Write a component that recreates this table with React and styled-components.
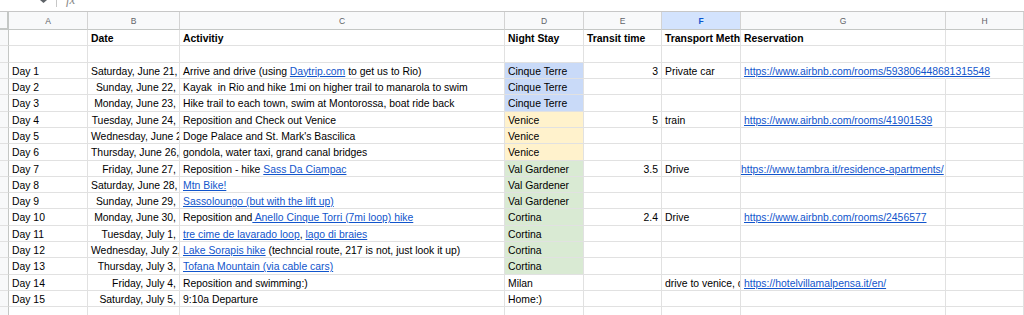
import React from 'react';
import styled, { createGlobalStyle } from 'styled-components';

const GlobalStyle = createGlobalStyle`
  body {
    margin: 0;
    background: #fff;
    font-family: "Liberation Sans", Arial, sans-serif;
  }
`;

const columns = ['A', 'B', 'C', 'D', 'E', 'F', 'G', 'H'];

const stayColors = {
  'Cinque Terre': '#c9daf8',
  Venice: '#fff2cc',
  'Val Gardener': '#d9ead3',
  Cortina: '#d9ead3',
};

const days = [
  {
    date: 'Saturday, June 21,',
    act: ['Arrive and drive (using ', { l: 'Daytrip.com' }, ' to get us to Rio)'],
    stay: 'Cinque Terre',
    time: '3',
    method: 'Private car',
    res: 'https://www.airbnb.com/rooms/593806448681315548',
    spill: true,
  },
  { date: 'Sunday, June 22,', act: ['Kayak  in Rio and hike 1mi on higher trail to manarola to swim'], stay: 'Cinque Terre' },
  { date: 'Monday, June 23,', act: ['Hike trail to each town, swim at Montorossa, boat ride back'], stay: 'Cinque Terre' },
  {
    date: 'Tuesday, June 24,',
    act: ['Reposition and Check out Venice'],
    stay: 'Venice',
    time: '5',
    method: 'train',
    res: 'https://www.airbnb.com/rooms/41901539',
  },
  { date: 'Wednesday, June 25,', act: ["Doge Palace and St. Mark's Bascilica"], stay: 'Venice' },
  { date: 'Thursday, June 26,', act: ['gondola, water taxi, grand canal bridges'], stay: 'Venice' },
  {
    date: 'Friday, June 27,',
    act: ['Reposition - hike ', { l: 'Sass Da Ciampac' }],
    stay: 'Val Gardener',
    time: '3.5',
    method: 'Drive',
    res: 'https://www.tambra.it/residence-apartments/',
    tight: true,
  },
  { date: 'Saturday, June 28,', act: [{ l: 'Mtn Bike!' }], stay: 'Val Gardener' },
  { date: 'Sunday, June 29,', act: [{ l: 'Sassoloungo (but with the lift up)' }], stay: 'Val Gardener' },
  {
    date: 'Monday, June 30,',
    act: ['Reposition and', { l: ' Anello Cinque Torri (7mi loop) hike' }],
    stay: 'Cortina',
    time: '2.4',
    method: 'Drive',
    res: 'https://www.airbnb.com/rooms/2456577',
  },
  { date: 'Tuesday, July 1,', act: [{ l: 'tre cime de lavarado loop' }, ', ', { l: 'lago di braies' }], stay: 'Cortina' },
  {
    date: 'Wednesday, July 2,',
    act: [{ l: 'Lake Sorapis hike' }, ' (techncial route, 217 is not, just look it up)'],
    stay: 'Cortina',
  },
  { date: 'Thursday, July 3,', act: [{ l: 'Tofana Mountain (via cable cars)' }], stay: 'Cortina' },
  {
    date: 'Friday, July 4,',
    act: ['Reposition and swimming:)'],
    stay: 'Milan',
    method: 'drive to venice, check out',
    res: 'https://hotelvillamalpensa.it/en/',
  },
  { date: 'Saturday, July 5,', act: ['9:10a Departure'], stay: 'Home:)' },
];

const Sheet = styled.div`
  width: 1024px;
  height: 315px;
  overflow: hidden;
  background: #fff;
`;

const FormulaStrip = styled.div`
  height: 11px;
  display: flex;
  align-items: flex-start;
  padding-left: 40px;
  border-bottom: 1px solid #c7c7c7;
  overflow: hidden;
`;

const Caret = styled.svg`
  width: 7px;
  height: 3px;
  display: block;
`;

const Divider = styled.div`
  width: 1px;
  height: 7px;
  margin-left: 9px;
  background: #c7c7c7;
`;

const Fx = styled.span`
  margin-left: 9px;
  margin-top: -7px;
  font-family: "Liberation Serif", serif;
  font-style: italic;
  font-size: 13px;
  line-height: 13px;
  color: #8a8a8a;
`;

const Grid = styled.div`
  display: grid;
  grid-template-columns: 9px 79px 92px 325px 79px 78px 79px 205px 1fr;
  grid-template-rows: 18px;
  grid-auto-rows: 16.32px;
`;

const Corner = styled.div`
  background: #f8f9fa;
  border-right: 2px solid #c4c7c5;
  border-bottom: 2px solid #c4c7c5;
`;

const ColHead = styled.div`
  box-sizing: border-box;
  background: ${(p) => (p.$active ? '#d3e3fd' : '#f8f9fa')};
  border-right: 1px solid #d3d3d3;
  border-bottom: 1px solid #c4c7c5;
  display: flex;
  align-items: center;
  justify-content: center;
  font-size: 8.5px;
  font-weight: ${(p) => (p.$active ? 700 : 400)};
  color: ${(p) => (p.$active ? '#0b57d0' : '#5f6368')};
`;

const RowHead = styled.div`
  background: #f8f9fa;
  border-right: 1px solid #c4c7c5;
  border-bottom: 1px solid #e1e1e1;
`;

const Cell = styled.div`
  box-sizing: border-box;
  background: ${(p) => p.$bg || 'transparent'};
  border-right: 1px solid ${(p) => (p.$spill ? 'transparent' : '#e1e1e1')};
  border-bottom: 1px solid #e1e1e1;
  padding: 1px ${(p) => (p.$tight ? '0' : '3px')} 0;
  font-size: 10.4px;
  line-height: 15.3px;
  font-weight: ${(p) => (p.$bold ? 700 : 400)};
  color: #000;
  text-align: ${(p) => p.$align || 'left'};
  white-space: pre;
  overflow: ${(p) => (p.$spill ? 'visible' : 'hidden')};
  position: ${(p) => (p.$spill ? 'relative' : 'static')};
  z-index: ${(p) => (p.$spill ? 1 : 'auto')};
`;

const Link = styled.span`
  color: #1155cc;
  text-decoration: underline;
`;

const Text = ({ parts }) =>
  parts.map((part, i) =>
    typeof part === 'string' ? <span key={i}>{part}</span> : <Link key={i}>{part.l}</Link>
  );

const Row = ({ label, date, act, stay, time, method, res, bold, spill, tight, header }) => (
  <>
    <RowHead />
    <Cell $bold={bold}>{label}</Cell>
    <Cell $bold={bold} $align={header ? 'left' : 'right'}>{date}</Cell>
    <Cell $bold={bold}>{act ? <Text parts={act} /> : null}</Cell>
    <Cell $bold={bold} $bg={stayColors[stay]}>{stay}</Cell>
    <Cell $bold={bold} $align={header ? 'left' : 'right'}>{time}</Cell>
    <Cell $bold={bold}>{method}</Cell>
    <Cell $bold={bold} $spill={spill} $tight={tight}>
      {res && !header ? <Link>{res}</Link> : res}
    </Cell>
    <Cell />
  </>
);

const App = () => {
  return (
    <Sheet>
      <GlobalStyle />
      <FormulaStrip>
        <Caret viewBox="0 0 7 3">
          <path d="M0 0 L7 0 L3.5 3 Z" fill="#5f6368" />
        </Caret>
        <Divider />
        <Fx>fx</Fx>
      </FormulaStrip>
      <Grid>
        <Corner />
        {columns.map((c) => (
          <ColHead key={c} $active={c === 'F'}>{c}</ColHead>
        ))}
        <Row
          header
          bold
          date="Date"
          act={['Activitiy']}
          stay="Night Stay"
          time="Transit time"
          method="Transport Method"
          res="Reservation"
        />
        <Row header />
        {days.map((d, i) => (
          <Row key={d.date} label={`Day ${i + 1}`} {...d} />
        ))}
        <Row header />
      </Grid>
    </Sheet>
  );
};

export default App;
